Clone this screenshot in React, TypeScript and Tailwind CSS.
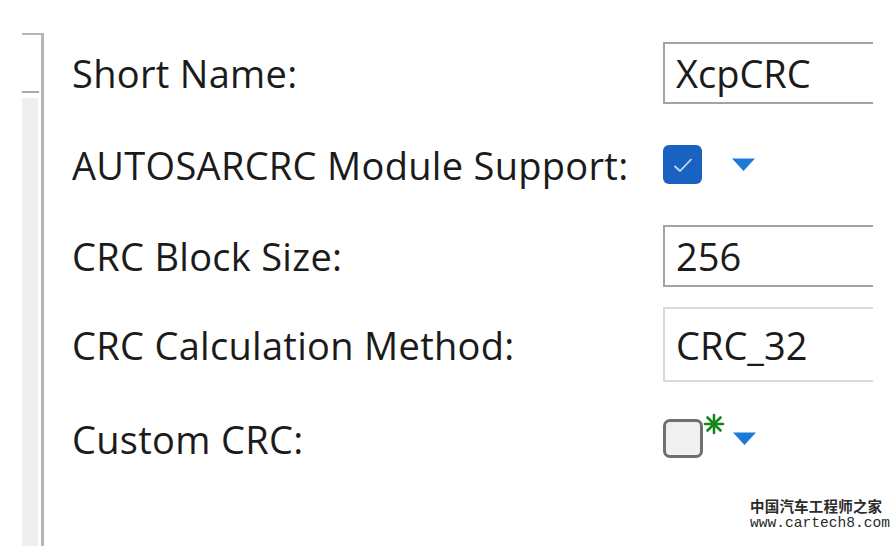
import React from 'react';

function Caret() {
  return (
    <svg width="25" height="15" viewBox="0 0 25 15" className="ml-[29px]">
      <path d="M1 1.5 L24 1.5 L12.5 14 Z" fill="#1a7ad6" />
    </svg>
  );
}

function Row({ label, h, children, className = '' }: { label: string; h: string; children: React.ReactNode; className?: string }) {
  return (
    <div className={`flex items-center ${h} ${className}`}>
      <div className="w-[619px] shrink-0 whitespace-nowrap pl-[28px] tracking-[0.3px] text-[#1b1b1b]">{label}</div>
      <div className="flex w-[210px] shrink-0 items-center">{children}</div>
    </div>
  );
}

export default function App() {
  return (
    <div className="relative flex h-[546px] w-[896px] overflow-hidden bg-white font-['Open_Sans',sans-serif] text-[38px] leading-none">
      {/* side panel */}
      <div className="ml-[22px] flex w-[22px] shrink-0 flex-col pt-[33px]">
        <div className="flex h-full flex-col border-t-2 border-r-[3px] border-[#b5b5b9]">
          <div className="h-[56px]" />
          <div className="mr-[2px] h-[2px] bg-[#a9a9a9]" />
          <div className="mt-[5px] mr-[3px] flex-1 bg-[#efefef]" />
        </div>
      </div>

      <div className="flex shrink-0 flex-col pt-[42px]">
        <Row label="Short Name:" h="h-[62px]">
          <div className="flex h-[62px] w-[210px] items-center border-2 border-r-0 border-[#a3a3a3] pl-[11px] text-[#1b1b1b]">XcpCRC</div>
        </Row>
        <Row label="AUTOSARCRC Module Support:" h="h-[121px]">
          <div className="flex h-[39px] w-[39px] items-center justify-center rounded-[6px] bg-[#1a62c2]">
            <svg width="22" height="18" viewBox="0 0 22 18">
              <path d="M2.5 10 L8 15 L19.5 3" fill="none" stroke="#c9d8ef" strokeWidth="1.8" />
            </svg>
          </div>
          <Caret />
        </Row>
        <Row label="CRC Block Size:" h="h-[62px]">
          <div className="flex h-[62px] w-[210px] items-center border-2 border-r-0 border-[#a3a3a3] pl-[11px] text-[#1b1b1b]">256</div>
        </Row>
        <Row label="CRC Calculation Method:" h="h-[75px]" className="mt-[20px]">
          <div className="flex h-[75px] w-[210px] items-center border-2 border-r-0 border-[#d9d9d9] pl-[11px] text-[#1b1b1b]">CRC_32</div>
        </Row>
        <Row label="Custom CRC:" h="h-[113px]">
          <div className="relative flex items-center">
            <div className="h-[39px] w-[40px] rounded-[7px] border-[3px] border-[#6f6f6f] bg-[#f0f0f0]" />
            <svg width="22" height="22" viewBox="0 0 22 22" className="absolute left-[40px] top-[-6px]">
              <g stroke="#15861b" strokeWidth="2.6" strokeLinecap="round">
                <path d="M11 2 L11 20" />
                <path d="M2 11 L20 11" />
                <path d="M4.5 4.5 L17.5 17.5" />
                <path d="M17.5 4.5 L4.5 17.5" />
              </g>
            </svg>
          </div>
          <Caret />
        </Row>
      </div>

      <div className="absolute left-[750px] top-[497px] flex flex-col items-start text-[#2a2a2a]">
        <span className="font-['Noto_Sans_CJK_SC',serif] text-[14.5px] font-bold leading-[18px] tracking-[0.2px]">中国汽车工程师之家</span>
        <span className="font-['Liberation_Mono',monospace] text-[14.6px] leading-[16px]">www.cartech8.com</span>
      </div>
    </div>
  );
}
